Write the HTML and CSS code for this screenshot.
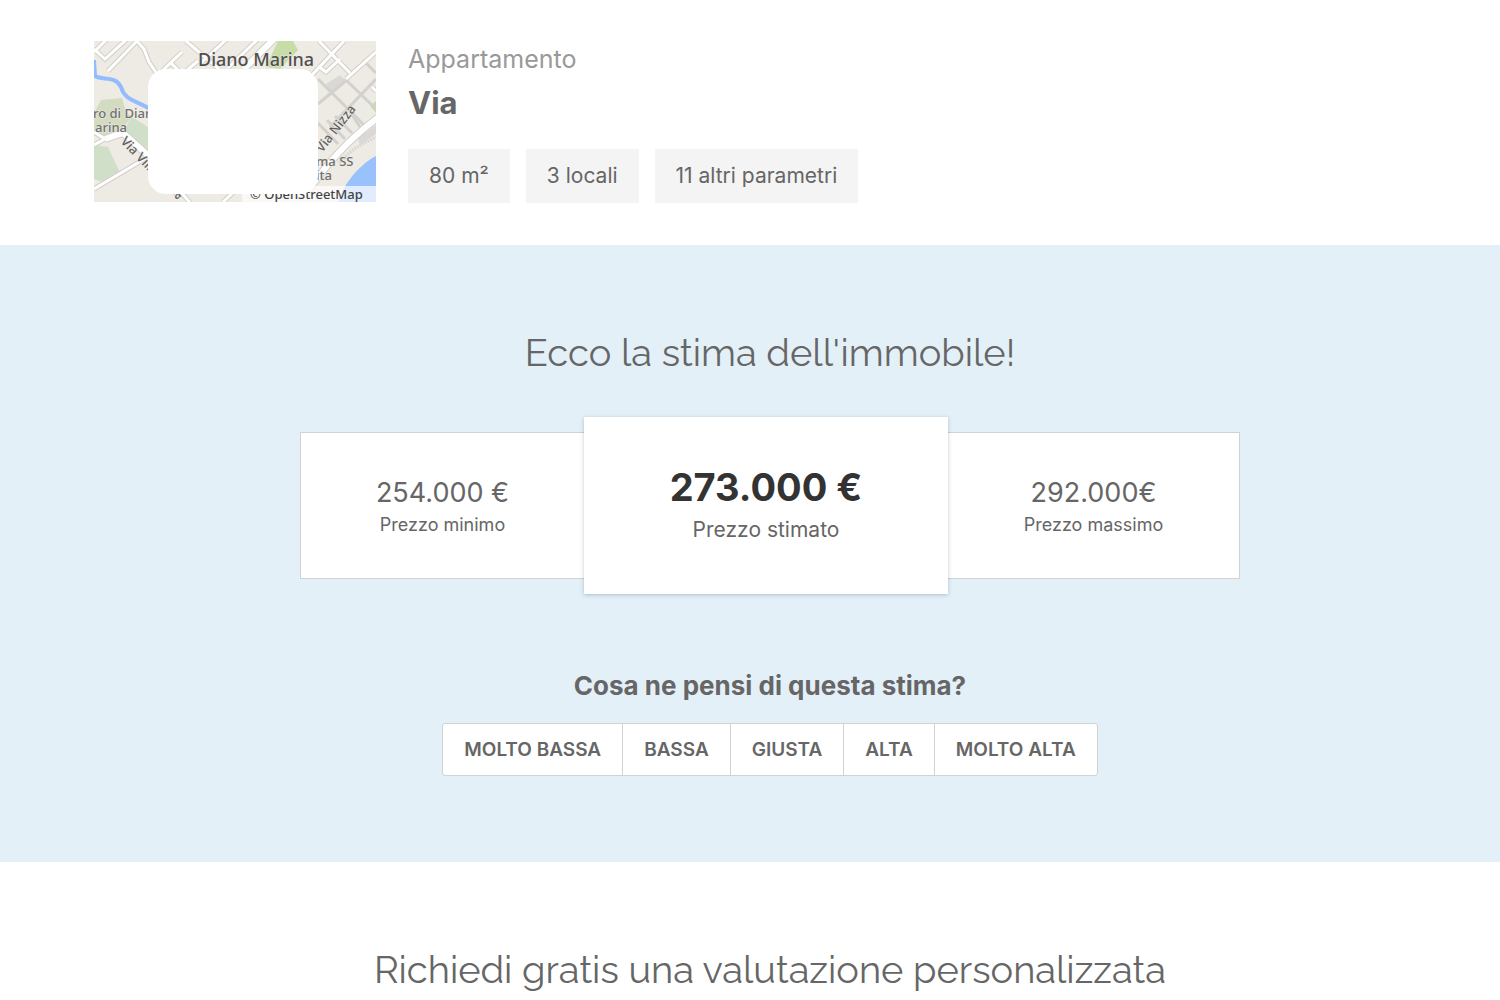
FILE: index.html
```html
<!DOCTYPE html>
<html lang="it">
<head>
<meta charset="utf-8">
<meta name="viewport" content="width=device-width, initial-scale=1">
<title>Stima dell'immobile</title>
<link rel="stylesheet" href="styles.css">
</head>
<body>
<header class="property">
  <svg class="map" viewBox="0 0 282 161" role="img" aria-label="Mappa di Diano Marina">
    <rect width="282" height="161" fill="#eeebe4"/>
    <!-- parks and sea -->
    <path d="M0 72L7 59L28 57L32 71L38 76L24 92L11 97L0 90Z" fill="#d3dcc0"/>
    <g fill="#d0dfc8">
      <path d="M38 76L54 86V112L29 90Z"/>
      <path d="M0 104L14 106L27 134L12 142L0 138Z"/>
    </g>
    <path d="M184 0H199L204 9L186 28L172 26Z" fill="#c6dda8"/>
    <path d="M276 65L282 60V72Z" fill="#c6dda8"/>
    <path d="M244 161C248 146 264 124 282 115V161Z" fill="#99c1fc"/>
    <path d="M232 43L246 34L252 40L237 52Z" fill="#dad9d7"/>
    <path d="M264 97L282 84V93L266 104Z" fill="#dad9d7"/>
    <!-- minor streets -->
    <g fill="none" stroke="#d3d1ce" stroke-width="3">
      <path d="M224 63L254 38M236 86L282 38M251 38L282 68M224 38L270 84M269 19L282 32"/>
      <path d="M224 82L244 103M233 79L251 98M241 75L258 92M253 66L266 86"/>
    </g>
    <!-- main streets -->
    <g fill="none" stroke="#d2cfca" stroke-width="5">
      <path d="M0 11L14 -3M0 8L11 18L33 -2M14 30L43 0M43 0L50 8L55 21L63 33M68 30L88 11M76 21L86 31M92 0L125 28M92 30L104 20M106 23L134 -3M134 27L164 -2M218 34L250 0M225 0L256 32M224 25L232 31L246 18M252 38L282 11M0 104L11 98L0 91M0 148L52 117M86 150L98 164M129 161L145 146M278 46L282 50"/>
    </g>
    <g fill="none" stroke="#fff" stroke-width="3">
      <path d="M0 11L14 -3M0 8L11 18L33 -2M14 30L43 0M43 0L50 8L55 21L63 33M68 30L88 11M76 21L86 31M92 0L125 28M92 30L104 20M106 23L134 -3M134 27L164 -2M218 34L250 0M225 0L256 32M224 25L232 31L246 18M252 38L282 11M0 104L11 98L0 91M0 148L52 117M86 150L98 164M129 161L145 146M278 46L282 50"/>
    </g>
    <g fill="none" stroke="#d2cfca" stroke-width="8">
      <path d="M150 28L182 -4M11 98L29 92L58 118M210 155C236 119 254 99 286 75"/>
    </g>
    <g fill="none" stroke="#fff" stroke-width="6">
      <path d="M150 28L182 -4M11 98L29 92L58 118M210 155C236 119 254 99 286 75"/>
    </g>
    <path d="M0 19L1 35C8 40 21 34 27 46C31 60 42 59 56 68" fill="none" stroke="#91bdff" stroke-width="4"/>
    <path d="M245 122C256 109 268 103 282 96" fill="none" stroke="#dad8d5" stroke-width="3" stroke-dasharray="2 1"/>
    <rect x="148" y="145" width="134" height="16" fill="#fff" opacity=".7"/>
    <g class="map-labels">
      <text x="104" y="25" class="map-town">Diano Marina</text>
      <text x="-1" y="77">ro di Diar</text>
      <text x="1" y="91">arina</text>
      <text x="222" y="125">ma SS</text>
      <text x="222" y="139">ita</text>
      <text transform="translate(26 101) rotate(46)" class="map-street">Via Vill</text>
      <text transform="translate(228 112) rotate(-52)" class="map-street">Via Nizza</text>
      <text transform="translate(82 159) rotate(-35)" class="map-street">a</text>
      <text x="156" y="158" class="map-credit">© OpenStreetMap</text>
    </g>
    <rect x="54" y="28" width="170" height="125" rx="18" fill="#fff"/>
  </svg>
  <div class="summary">
    <p class="kind">Appartamento</p>
    <h1 class="address">Via</h1>
    <ul class="facts">
      <li class="fact">80 m²</li>
      <li class="fact">3 locali</li>
      <li class="fact">11 altri parametri</li>
    </ul>
  </div>
</header>
<main>
  <section class="estimate">
    <h2 class="title">Ecco la stima dell'immobile!</h2>
    <div class="prices">
      <div class="price price-min">
        <strong class="amount">254.000 €</strong>
        <span class="caption">Prezzo minimo</span>
      </div>
      <div class="price price-main">
        <strong class="amount">273.000 €</strong>
        <span class="caption">Prezzo stimato</span>
      </div>
      <div class="price price-max">
        <strong class="amount">292.000€</strong>
        <span class="caption">Prezzo massimo</span>
      </div>
    </div>
    <h3 class="question" id="question">Cosa ne pensi di questa stima?</h3>
    <div class="votes" role="group" aria-labelledby="question">
      <button class="vote" type="button">MOLTO BASSA</button>
      <button class="vote" type="button">BASSA</button>
      <button class="vote" type="button">GIUSTA</button>
      <button class="vote" type="button">ALTA</button>
      <button class="vote" type="button">MOLTO ALTA</button>
    </div>
  </section>
  <section class="request">
    <h2 class="title">Richiedi gratis una valutazione personalizzata</h2>
  </section>
</main>
</body>
</html>
```
FILE: styles.css
```css
* {
  box-sizing: border-box;
}

body {
  margin: 0;
  background: #fff;
  color: #666;
  font-family: Inter, "Liberation Sans", sans-serif;
}

h1, h2, h3, p, ul {
  margin: 0;
  padding: 0;
}

.property {
  display: flex;
  gap: 32px;
  padding: 41px 54px 42px 94px;
}

.map {
  flex: none;
  width: 282px;
  height: 161px;
}

.map-labels {
  fill: #707070;
  stroke: #eeebe4;
  stroke-width: 1px;
  paint-order: stroke;
  font-family: "Noto Sans", sans-serif;
  font-size: 13px;
  font-weight: 500;
}

.map-street {
  fill: #606060;
}

.map-town {
  fill: #505050;
  font-size: 18px;
}

.map-credit {
  fill: #444;
  stroke: none;
}

.summary {
  display: flex;
  flex-direction: column;
}

.kind {
  color: #999;
  font-size: 25px;
  line-height: 36px;
}

.address {
  font-size: 31px;
  font-weight: 700;
  line-height: 52px;
}

.facts {
  display: flex;
  gap: 16px;
  margin-top: 20px;
  list-style: none;
}

.fact {
  padding: 0 21px;
  background: #f4f4f4;
  font-size: 21px;
  line-height: 54px;
}

.estimate,
.request {
  display: flex;
  flex-direction: column;
  align-items: center;
  padding: 84px 20px 86px 60px;
}

.estimate {
  background: #e4f0f8;
}

.title {
  font-family: Raleway, Lato, sans-serif;
  font-size: 38px;
  font-weight: 400;
  line-height: 48px;
  text-align: center;
}

.prices {
  display: grid;
  grid-template-columns: 284fr 364fr 292fr;
  align-items: center;
  width: 100%;
  max-width: 940px;
  margin-top: 40px;
}

.price {
  display: flex;
  flex-direction: column;
  align-items: center;
  justify-content: center;
  min-height: 147px;
  padding-top: 4px;
  border: 1px solid #d2d2d2;
  background: #fff;
}

.price-min {
  border-right: 0;
}

.price-max {
  border-left: 0;
}

.price-main {
  z-index: 1;
  min-height: 177px;
  padding-top: 0;
  border: 0;
  box-shadow: 0 1px 4px rgba(0, 50, 80, .25);
}

.amount {
  font-size: 27px;
  font-weight: 400;
  line-height: 34px;
}

.caption {
  font-size: 18px;
  line-height: 30px;
}

.price-main .amount {
  color: #333;
  font-size: 38px;
  font-weight: 700;
  line-height: 48px;
}

.price-main .caption {
  font-size: 21px;
  line-height: 38px;
}

.question {
  margin-top: 74px;
  font-size: 26px;
  font-weight: 700;
  line-height: 36px;
  text-align: center;
}

.votes {
  display: flex;
  margin-top: 19px;
  border: 1px solid #d2d2d2;
  border-radius: 3px;
  background: #fff;
}

.vote {
  padding: 0 21px;
  border: 0;
  background: none;
  color: #666;
  font-family: inherit;
  font-size: 19px;
  font-weight: 600;
  line-height: 51px;
}

.vote + .vote {
  border-left: 1px solid #d2d2d2;
}
```
